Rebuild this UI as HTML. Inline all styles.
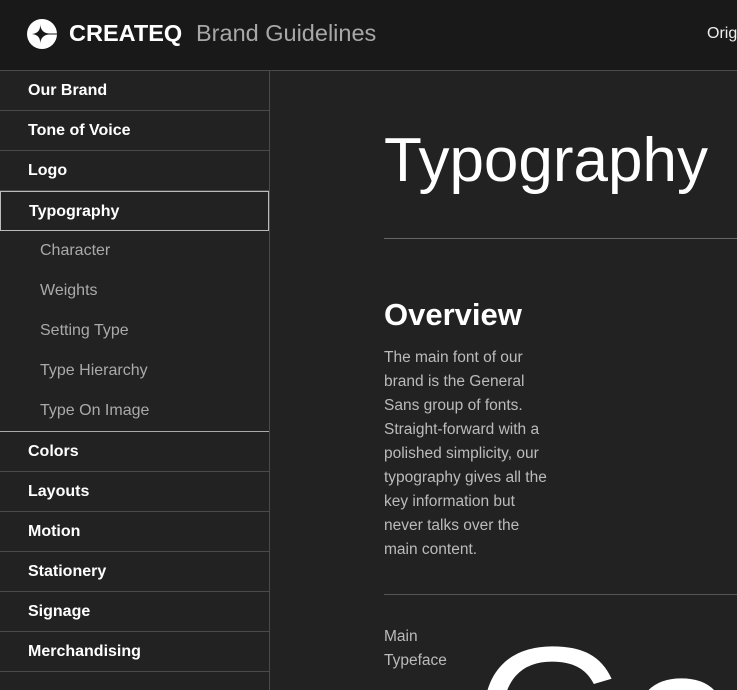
<!DOCTYPE html>
<html style="width:737px;height:690px;overflow:hidden"><head><meta charset="utf-8"><style>
*{margin:0;padding:0;box-sizing:border-box}
body{width:737px;height:690px;overflow:hidden;background:#222;font-family:"Liberation Sans",sans-serif;color:#fff;position:relative}
.hdr{position:absolute;left:0;top:0;width:737px;height:71px;background:#191919;border-bottom:1px solid #4a4a4a}
.logo{position:absolute;left:27px;top:19px}
.brand{position:absolute;left:69px;top:20px;font-size:23.5px;font-weight:bold;letter-spacing:0}
.bg{position:absolute;left:196px;top:20px;font-size:23.5px;color:#a8a8a8}
.orig{position:absolute;left:707px;top:25px;font-size:16px;color:#eee;white-space:nowrap}
.side{position:absolute;left:0;top:71px;width:270px;height:619px;border-right:1px solid #4a4a4a}
.it{height:40px;border-bottom:1px solid #4a4a4a;font-size:16px;font-weight:bold;padding-left:28px;line-height:39px}
.sel{border:1px solid #bbb;padding-left:28px}
.sub{height:40px;font-size:16px;color:#aaa;padding-left:40px;line-height:39px}
.subs{border-bottom:1px solid #aaa}
.main{position:absolute;left:384px}
.clip{position:absolute;left:0;top:0;width:737px;height:690px;overflow:hidden}
</style></head><body>
<div class="clip">
<div class="hdr">
<svg class="logo" width="32" height="32" viewBox="0 0 32 32"><circle cx="15" cy="15" r="15" fill="#fff"/><path d="M13 5 Q14 14 5 15 Q14 16 13 25 Q14 16 22 15.5 L30 15.5 L30 14.5 L22 14.5 Q14 14 13 5Z" fill="#191919"/></svg>
<div class="brand">CREATEQ</div>
<div class="bg">Brand Guidelines</div>
<div class="orig">Orig</div>
</div>
<div class="side">
<div class="it">Our Brand</div>
<div class="it">Tone of Voice</div>
<div class="it">Logo</div>
<div class="it sel">Typography</div>
<div class="subs">
<div class="sub">Character</div>
<div class="sub">Weights</div>
<div class="sub">Setting Type</div>
<div class="sub">Type Hierarchy</div>
<div class="sub">Type On Image</div>
</div>
<div class="it">Colors</div>
<div class="it">Layouts</div>
<div class="it">Motion</div>
<div class="it">Stationery</div>
<div class="it">Signage</div>
<div class="it">Merchandising</div>
</div>
<div class="main" style="top:125px;font-size:62px;letter-spacing:0">Typography</div>
<div style="position:absolute;left:384px;top:238px;width:353px;height:1px;background:#666"></div>
<div class="main" style="top:297px;font-size:31px;font-weight:bold">Overview</div>
<div class="main" style="top:346px;width:170px;font-size:15.5px;line-height:24px;color:#bbb">The main font of our brand is the General Sans group of fonts. Straight-forward with a polished simplicity, our typography gives all the key information but never talks over the main content.</div>
<div style="position:absolute;left:384px;top:594px;width:353px;height:1px;background:#555"></div>
<div class="main" style="top:625px;font-size:15.5px;line-height:24px;color:#bbb">Main<br>Typeface</div>
<div style="position:absolute;left:474px;top:618px;font-size:200px;line-height:1;color:#fff;letter-spacing:-4px;white-space:nowrap">Gen</div>
</div>
</body></html>
